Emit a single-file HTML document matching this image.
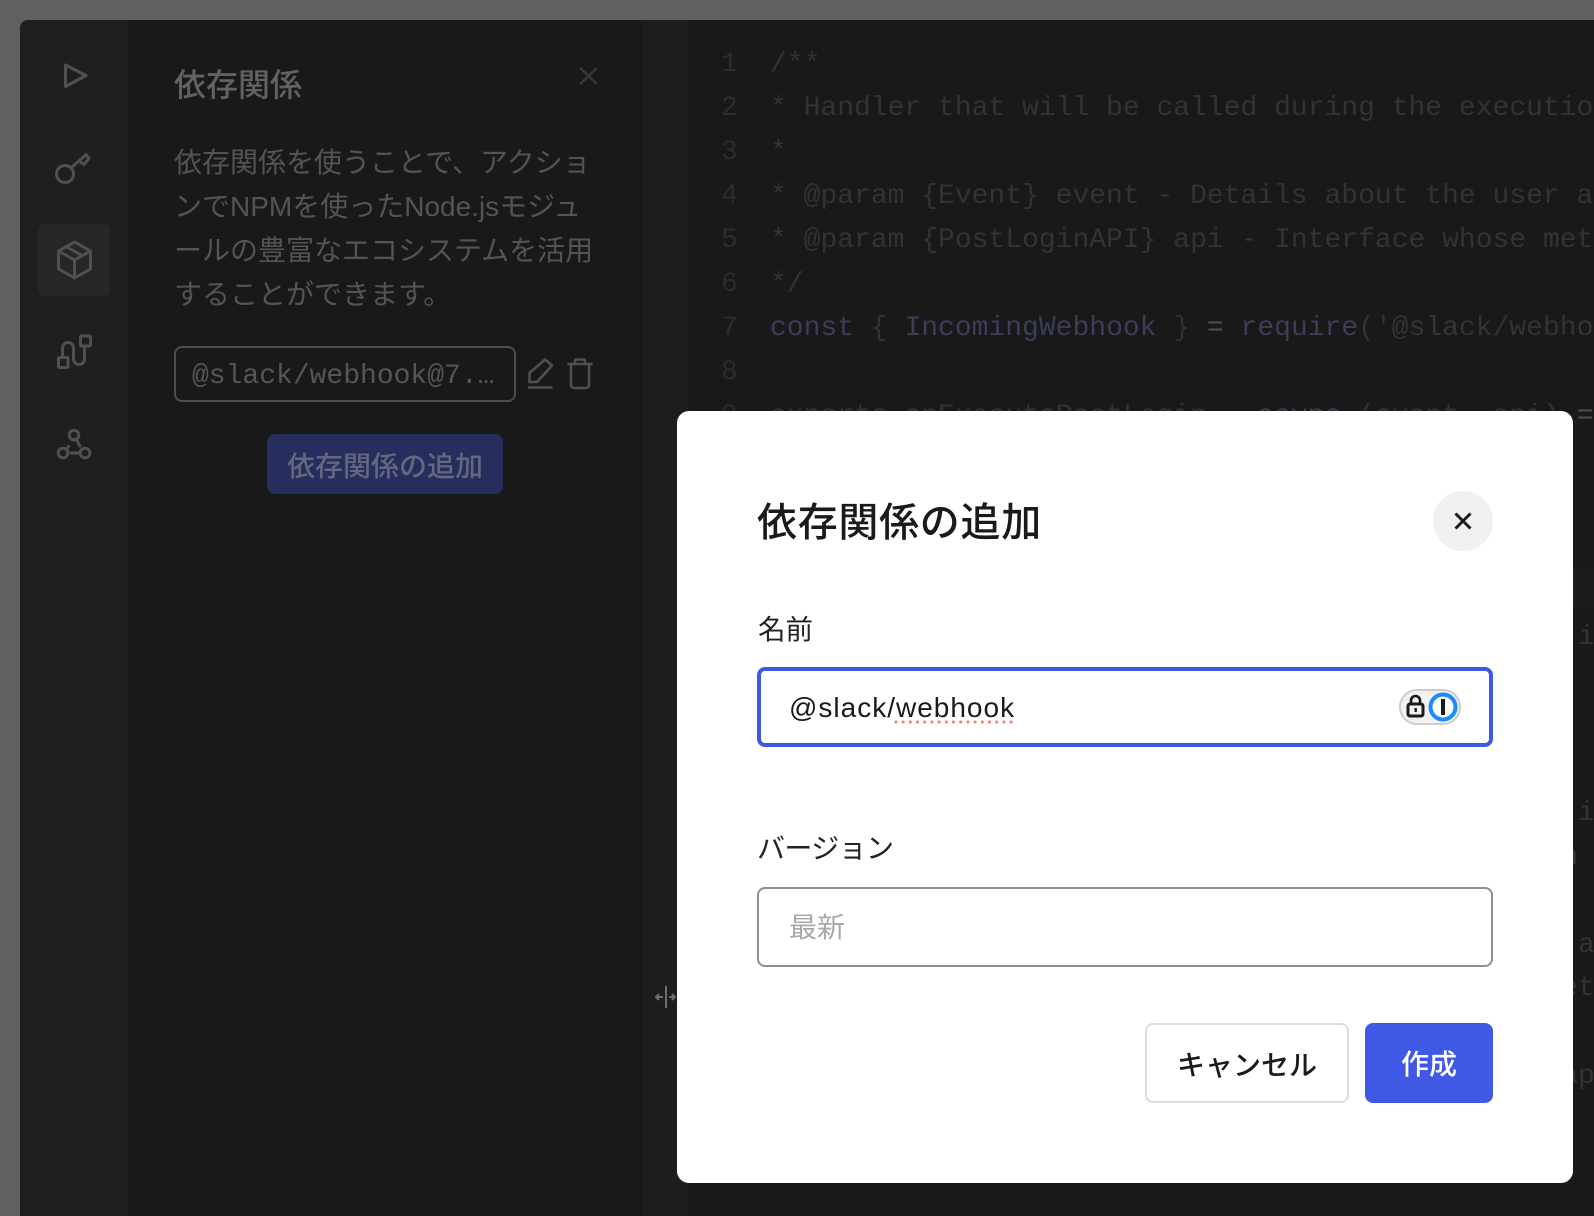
<!DOCTYPE html>
<html lang="ja"><head><meta charset="utf-8"><title>依存関係の追加</title>
<style>
html,body{margin:0;padding:0;width:1594px;height:1216px;overflow:hidden;background:#606060}
*{box-sizing:border-box}
body{position:relative;font-family:"Liberation Sans","Noto Sans CJK JP",sans-serif}
.a{position:absolute;white-space:nowrap}
#panel{position:absolute;left:20px;top:20px;width:1574px;height:1196px;background:#191919;border-radius:8px 0 0 0;overflow:hidden}
#side{position:absolute;left:20px;top:20px;width:108px;height:1196px;background:#1e2020;border-radius:8px 0 0 0}
#gut{position:absolute;left:642px;top:20px;width:47px;height:1196px;background:#1c1e1e}
#clip{position:absolute;left:0;top:0;width:1594px;height:1216px;overflow:hidden}
.c{position:absolute;left:770px;font:28px/44px "Liberation Mono",monospace;color:#333;white-space:pre;height:44px}
.n{position:absolute;left:721px;font:28px/44px "Liberation Mono",monospace;color:#2c2c2c;height:44px}
.k{color:#3b3d5a}
.o{color:#505050}
.t{color:#545454;font-size:28px;line-height:44px}
#modal{position:absolute;left:677px;top:411px;width:896px;height:772px;background:#fff;border-radius:12px}
.e{position:absolute;left:1578px;font:28px/44px "Liberation Mono",monospace;color:#333;height:44px}
</style></head><body>
<div id="panel"></div>
<div id="side"></div>
<div id="gut"></div>
<div class="a" style="left:38px;top:224px;width:72px;height:72px;background:#262626;border-radius:7px"></div>

<svg class="a" style="left:0;top:0" width="130" height="480" fill="none" stroke="#505050" stroke-width="3" stroke-linecap="round" stroke-linejoin="round">
<path d="M65.5 65 L86 75.5 L65.5 86.5 Z"/>
<circle cx="65" cy="174" r="8.5"/><path d="M71 168 L80 160"/><path d="M79 161 L86 154.5 L89 158.5 L84 164.5 Z"/>
<path d="M74.5 242 L90.5 251 V269 L74.5 278 L58.5 269 V251 Z"/><path d="M58.5 251 L74.5 260 L90.5 251"/><path d="M74.5 260 V278"/><path d="M66 246.5 L82 255.5"/>
<rect x="58.5" y="357.5" width="9.5" height="10" rx="1"/><rect x="80.5" y="336" width="10" height="10" rx="1"/>
<path d="M62.5 355 V348 a5.5 5.5 0 0 1 11 0 V359 a5.5 5.5 0 0 0 11 0 V349"/>
<circle cx="74" cy="435" r="4.8"/><circle cx="63" cy="453" r="4.8"/><circle cx="85" cy="453" r="4.8"/>
<path d="M67.5 448.5 L68.5 446.5"/><path d="M76.5 440 L80 446"/><path d="M71 453 H78"/>
</svg>

<div class="a" style="left:174px;top:61px;font-size:32px;line-height:48px;font-weight:500;color:#626262">依存関係</div>
<svg class="a" style="left:575px;top:62px" width="28" height="28" fill="none" stroke="#383838" stroke-width="2.4"><path d="M5 6 L22 22 M22 6 L5 22"/></svg>
<div class="a t" style="left:174px;top:141px">依存関係を使うことで、アクショ<br>ンでNPMを使ったNode.jsモジュ<br>ールの豊富なエコシステムを活用<br>することができます。</div>
<div class="a" style="left:174px;top:346px;width:342px;height:56px;border:2px solid #4e4e4e;border-radius:8px"></div>
<div class="a" style="left:192px;top:355px;font:28px/44px 'Liberation Mono',monospace;color:#565656">@slack/webhook@7.…</div>
<svg class="a" style="left:520px;top:350px" width="80" height="44" fill="none" stroke="#505050" stroke-width="2.6" stroke-linecap="round" stroke-linejoin="round">
<path d="M9.5 23 L25 9.5 L32 15.5 L17 32 L9.5 32 Z"/><path d="M9 37.5 H31.5"/>
<path d="M48.5 14 H71.5"/><path d="M55 14 V11 a1.5 1.5 0 0 1 1.5 -1.5 H63.5 a1.5 1.5 0 0 1 1.5 1.5 V14"/><path d="M51 16 V35 a3 3 0 0 0 3 3 H66 a3 3 0 0 0 3 -3 V16"/>
</svg>
<div class="a" style="left:267px;top:434px;width:236px;height:60px;background:#272d5c;border-radius:8px;text-align:center;font-size:28px;line-height:66px;font-weight:500;color:#63677f">依存関係の追加</div>

<div id="clip">
<div class="n" style="top:43px">1</div><div class="c" style="top:43px">/**</div>
<div class="n" style="top:87px">2</div><div class="c" style="top:87px">* Handler that will be called during the execution of a flow</div>
<div class="n" style="top:131px">3</div><div class="c" style="top:131px">*</div>
<div class="n" style="top:175px">4</div><div class="c" style="top:175px">* @param {Event} event - Details about the user and the</div>
<div class="n" style="top:219px">5</div><div class="c" style="top:219px">* @param {PostLoginAPI} api - Interface whose methods can</div>
<div class="n" style="top:263px">6</div><div class="c" style="top:263px">*/</div>
<div class="n" style="top:307px">7</div><div class="c" style="top:307px"><span class="k">const</span> { <span class="k">IncomingWebhook</span> } <span class="o">=</span> <span class="k">require</span>('@slack/webhook');</div>
<div class="n" style="top:351px">8</div>
<div class="n" style="top:395px">9</div><div class="c" style="top:395px">exports.onExecutePostLogin <span style="color:#191919">=</span> <span class="k">async</span> (event, api) <span class="o">=</span></div>
<div class="a" style="left:1573px;top:567px;width:21px;height:42px;background:#1c1c1c"></div>
<div class="e" style="top:616px">i</div>
<div class="e" style="top:792px">i</div>
<div class="e" style="left:1561.2px;top:836px">n</div>
<div class="e" style="top:924px">a</div>
<div class="e" style="left:1561.2px;top:967px">et</div>
<div class="e" style="left:1561.2px;top:1055px">ap</div>
</div>

<svg class="a" style="left:654px;top:983px" width="28" height="28" fill="none" stroke="#6e6e6e" stroke-width="2"><path d="M2 14 H9 M12 3 V25 M15 14 H21 M5 11 L2 14 L5 17 M18 11 L21 14 L18 17"/></svg>

<div id="modal"></div>
<div class="a" style="left:757px;top:493px;font-size:40px;letter-spacing:.7px;line-height:60px;font-weight:500;color:#1a1a1a">依存関係の追加</div>
<div class="a" style="left:1433px;top:491px;width:60px;height:60px;border-radius:50%;background:#f0f0f0"></div>
<svg class="a" style="left:1433px;top:491px" width="60" height="60" fill="none" stroke="#1a1a1a" stroke-width="3"><path d="M22.5 22.5 L37.5 37.5 M37.5 22.5 L22.5 37.5"/></svg>
<div class="a" style="left:758px;top:608px;font-size:27.5px;line-height:44px;color:#222">名前</div>
<div class="a" style="left:757px;top:667px;width:736px;height:80px;border:4px solid #4059e5;border-radius:8px"></div>
<div class="a" style="left:789px;top:686px;font-size:28px;line-height:44px;letter-spacing:1px;color:#1a1a1a">@slack/webhook</div>
<svg class="a" style="left:893px;top:719px" width="124" height="6"><line x1="1.5" y1="3" x2="122" y2="3" stroke="#f47a7a" stroke-width="2.8" stroke-dasharray="2.8 4.4"/></svg>
<svg class="a" style="left:1397px;top:687px" width="66" height="40">
<rect x="3" y="3" width="60" height="34" rx="17" fill="#f1f1f1" stroke="#ccc" stroke-width="2"/>
<path d="M14 17 V13.5 a4.5 4.5 0 0 1 9 0 V17" fill="none" stroke="#1a1a1a" stroke-width="2.6"/>
<rect x="11" y="17" width="15" height="12" rx="2" fill="none" stroke="#1a1a1a" stroke-width="3"/>
<rect x="17.5" y="21" width="2.4" height="4" fill="#1a1a1a"/>
<circle cx="46" cy="20" r="12.5" fill="#fff" stroke="#1a8cff" stroke-width="4"/>
<rect x="44" y="12" width="4" height="16" fill="#1a1a1a"/>
</svg>
<div class="a" style="left:757px;top:827px;font-size:28px;letter-spacing:-.6px;line-height:44px;color:#222">バージョン</div>
<div class="a" style="left:757px;top:887px;width:736px;height:80px;border:2px solid #909090;border-radius:8px"></div>
<div class="a" style="left:789px;top:906px;font-size:28px;line-height:44px;color:#a8a8a8">最新</div>
<div class="a" style="left:1145px;top:1023px;width:204px;height:80px;border:2px solid #ddd;border-radius:8px;background:#fff;text-align:center;font-size:28px;line-height:82px;font-weight:500;color:#1a1a1a">キャンセル</div>
<div class="a" style="left:1365px;top:1023px;width:128px;height:80px;background:#4059e5;border-radius:8px;text-align:center;font-size:28px;line-height:84px;font-weight:500;color:#fff">作成</div>
</body></html>
